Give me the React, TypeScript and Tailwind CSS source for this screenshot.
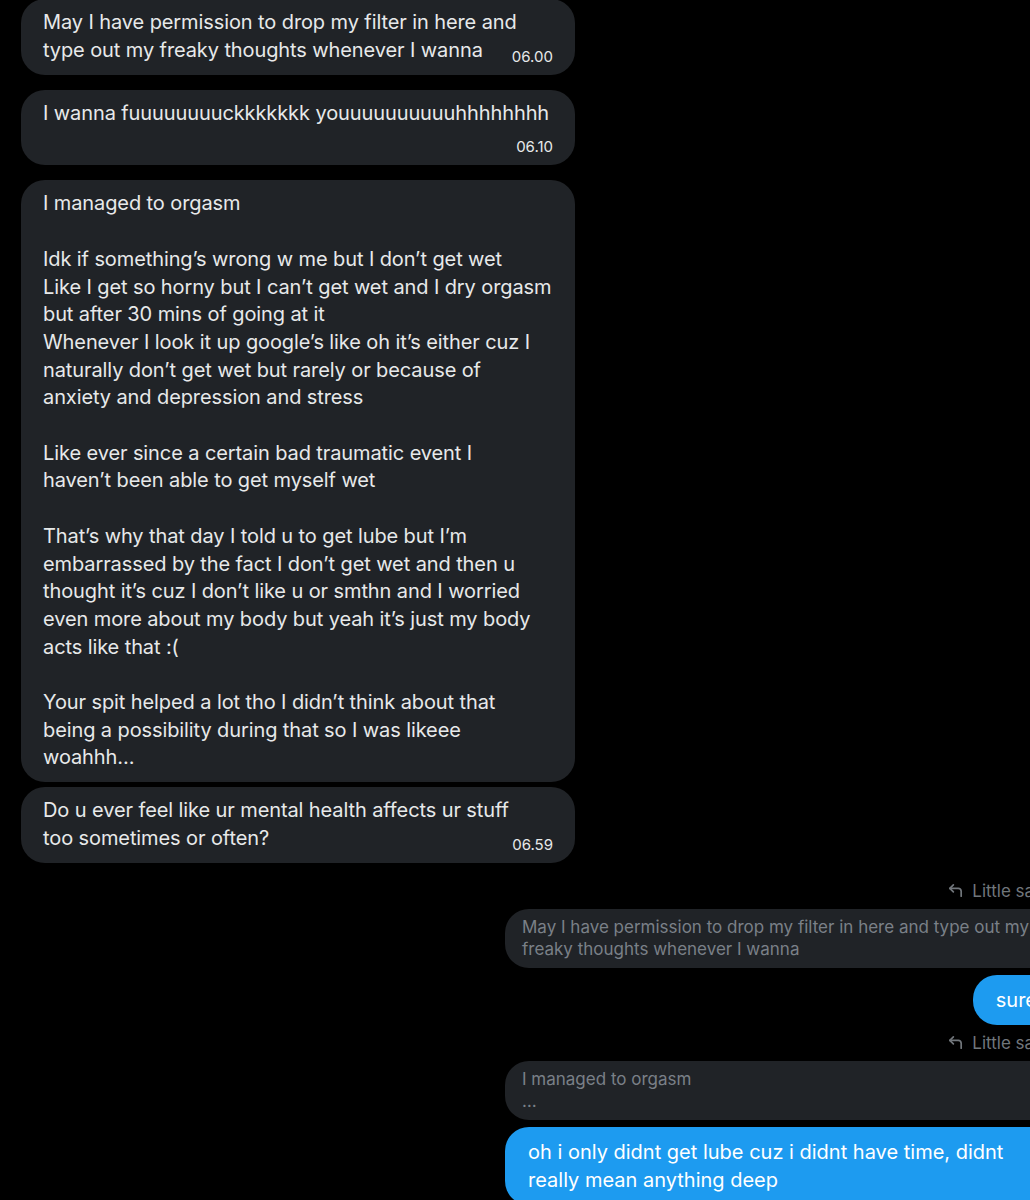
import { CornerUpLeft } from 'lucide-react';

const font = { fontFamily: 'Inter, "Noto Sans", sans-serif' };

type Msg = { lines: string[]; time?: string };

// lines are kept as they wrap in the screenshot
const received: Msg[] = [
    {
        lines: ['May I have permission to drop my filter in here and', 'type out my freaky thoughts whenever I wanna'],
        time: '06.00',
    },
    { lines: ['I wanna fuuuuuuuuckkkkkkk youuuuuuuuuuhhhhhhhh'], time: '06.10' },
    {
        lines: [
            'I managed to orgasm',
            '',
            'Idk if something’s wrong w me but I don’t get wet',
            'Like I get so horny but I can’t get wet and I dry orgasm',
            'but after 30 mins of going at it',
            'Whenever I look it up google’s like oh it’s either cuz I',
            'naturally don’t get wet but rarely or because of',
            'anxiety and depression and stress',
            '',
            'Like ever since a certain bad traumatic event I',
            'haven’t been able to get myself wet',
            '',
            'That’s why that day I told u to get lube but I’m',
            'embarrassed by the fact I don’t get wet and then u',
            'thought it’s cuz I don’t like u or smthn and I worried',
            'even more about my body but yeah it’s just my body',
            'acts like that :(',
            '',
            'Your spit helped a lot tho I didn’t think about that',
            'being a possibility during that so I was likeee',
            'woahhh…',
        ],
    },
    {
        lines: ['Do u ever feel like ur mental health affects ur stuff', 'too sometimes or often?'],
        time: '06.59',
    },
];

function Received({ msg, gap }: { msg: Msg; gap: string }) {
    return (
        <div className={`w-[554px] rounded-3xl bg-[#202327] px-[22px] py-[10px] ${gap}`}>
            <p className="flow-root whitespace-pre text-[20px] leading-[27.7px] tracking-[-0.1px] text-[#e7e9ea]">
                {msg.lines.join('\n')}
                {msg.time && (
                    <span className="float-right ml-5 mt-[12px] text-[15px] leading-[16px] tracking-normal text-[#e7e9ea]">
                        {msg.time}
                    </span>
                )}
            </p>
        </div>
    );
}

function ReplyLabel({ className }: { className: string }) {
    return (
        <div className={`mr-[11px] flex items-center justify-end gap-[8px] text-[17px] leading-[20px] text-[#71767b] ${className}`}>
            <CornerUpLeft className="h-[17px] w-[17px]" strokeWidth={2.4} />
            <span>Little sam</span>
        </div>
    );
}

function Quote({ text }: { text: string }) {
    return (
        <div className="w-[555px] self-end whitespace-pre-line rounded-3xl bg-[#202327] px-[17px] pb-[8px] pt-[7px] text-[17px] leading-[22px] text-[#7a8087]">
            {text}
        </div>
    );
}

function Sent({ text, className }: { text: string; className: string }) {
    return (
        <div className={`max-w-[555px] self-end rounded-3xl bg-[#1d9bf0] px-[23px] py-[11px] text-[20px] leading-[28px] text-white ${className}`}>
            {text}
        </div>
    );
}

export default function App() {
    return (
        <div className="h-[1200px] w-[1030px] overflow-hidden bg-black" style={font}>
            <div className="-mt-[1px] flex w-[1060px] flex-col pl-[21px]">
                <Received msg={received[0]} gap="" />
                <Received msg={received[1]} gap="mt-[15px]" />
                <Received msg={received[2]} gap="mt-[15px]" />
                <Received msg={received[3]} gap="mt-[5px]" />

                <ReplyLabel className="mt-[18px]" />
                <div className="mt-[8px] flex flex-col">
                    <Quote text="May I have permission to drop my filter in here and type out my freaky thoughts whenever I wanna" />
                    <Sent text="sure" className="mt-[7px]" />
                </div>

                <ReplyLabel className="mt-[8px]" />
                <div className="mt-[8px] flex flex-col">
                    <Quote text={'I managed to orgasm\n…'} />
                    <Sent text="oh i only didnt get lube cuz i didnt have time, didnt really mean anything deep" className="mt-[7px] w-[555px]" />
                </div>
            </div>
        </div>
    );
}
